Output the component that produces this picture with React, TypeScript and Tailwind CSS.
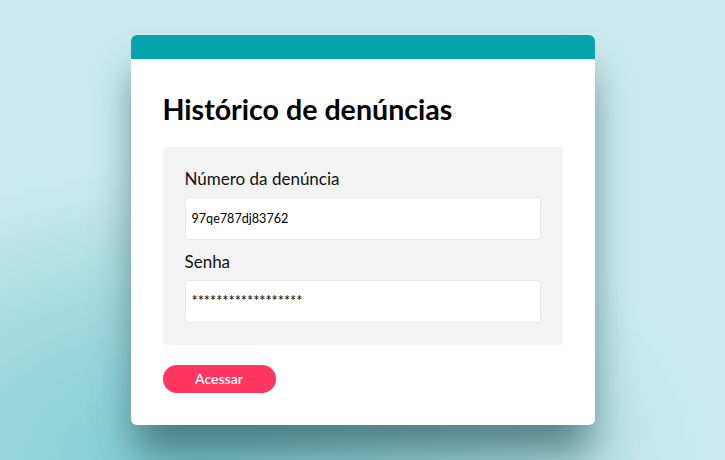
import { useState } from "react";

export default function App() {
  const [numero, setNumero] = useState("97qe787dj83762");
  const [senha, setSenha] = useState("******************");

  return (
    <div
      className="flex h-screen w-full items-center justify-center bg-[#cdebee] bg-[radial-gradient(ellipse_70%_65%_at_28%_100%,#7ccbd2_0%,#9ad7dc_45%,#cdebee_100%)]"
      style={{ fontFamily: "Lato, 'Noto Sans', sans-serif" }}
    >
      <div className="w-[464px] overflow-hidden rounded-md bg-white shadow-[0_32px_40px_-4px_rgba(50,90,95,0.7)]">
        <div className="h-6 bg-[#09a3ae]" />
        <div className="px-8 pt-8 pb-8">
          <h1 className="text-[28.6px] font-bold leading-[36px] text-black">Histórico de denúncias</h1>
          <div className="mt-[20px] rounded bg-[#f3f3f3] px-[22px] pt-[21px] pb-[22px]">
            <label className="block text-[17px] leading-[22px] text-[#111]">Número da denúncia</label>
            <input
              value={numero}
              onChange={(e) => setNumero(e.target.value)}
              className="mt-[7px] block h-[43px] w-full rounded border border-[#e8e8e8] bg-white px-[6px] text-[12.6px] text-black outline-none"
            />
            <label className="mt-[11px] block text-[17px] leading-[22px] text-[#111]">Senha</label>
            <input
              value={senha}
              onChange={(e) => setSenha(e.target.value)}
              className="mt-[7px] block h-[43px] w-full rounded border border-[#e8e8e8] bg-white px-[6px] pb-[3px] text-[14.5px] text-black outline-none"
            />
          </div>
          <button className="mt-5 h-7 w-[113px] rounded-full bg-[#ff3660] text-sm font-semibold text-white">
            Acessar
          </button>
        </div>
      </div>
    </div>
  );
}
